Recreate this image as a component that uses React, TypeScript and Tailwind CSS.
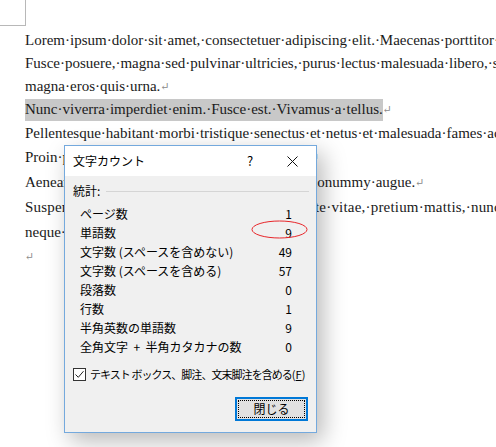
import React from 'react';

const serif = { fontFamily: '"Liberation Serif", "DejaVu Serif", serif' };

const docLines: { text: string; h: number; mark?: boolean; hl?: boolean; wide?: boolean }[] = [
  { text: 'Lorem·ipsum·dolor·sit·amet,·consectetuer·adipiscing·elit.·Maecenas·porttitor·congue', h: 23 },
  { text: 'Fusce·posuere,·magna·sed·pulvinar·ultricies,·purus·lectus·malesuada·libero,·sit·amet', h: 23 },
  { text: 'magna·eros·quis·urna.', h: 23, mark: true },
  { text: 'Nunc·viverra·imperdiet·enim.·Fusce·est.·Vivamus·a·tellus.', h: 23, mark: true, hl: true },
  { text: 'Pellentesque·habitant·morbi·tristique·senectus·et·netus·et·malesuada·fames·ac·turpis', h: 24 },
  { text: 'Proin·pharetra·nonummy·pede.·Mauris·et·orci.', h: 25, mark: true },
  { text: 'Aenean·nec·lorem.·In·porttitor.·Donec·laoreet·nonummy·augue.', h: 25, mark: true },
  { text: 'Suspendisse·dui·purus,·scelerisque·at,·vulputate·vitae,·pretium·mattis,·nunc.·Mauris', h: 25, wide: true },
  { text: 'neque·id·justo·porta·adipiscing·ornare.', h: 24, mark: true },
  { text: '', h: 24, mark: true },
];

const stats: [string, string][] = [
  ['ページ数', '1'],
  ['単語数', '9'],
  ['文字数 (スペースを含めない)', '49'],
  ['文字数 (スペースを含める)', '57'],
  ['段落数', '0'],
  ['行数', '1'],
  ['半角英数の単語数', '9'],
  ['全角文字\u00a0\u00a0+\u00a0\u00a0半角カタカナの数', '0'],
];

const Mark = () => <span className="text-[#8a8a8a] text-[11px] align-baseline">↵</span>;

export default function App() {
  return (
    <div className="relative w-[496px] h-[447px] overflow-hidden bg-white">
      {/* page corner mark */}
      <div className="absolute left-0 top-0 w-[26px] h-[26px] border-r border-b border-[#b8b8b8]" />

      {/* document text */}
      <div className="pt-[29px] pl-[25px] text-[15px] text-[#1a1a1a] whitespace-nowrap" style={serif}>
        {docLines.map((l, i) => (
          <div key={i} className={`flex items-center ${l.wide ? 'tracking-[0.2px]' : ''}`} style={{ height: l.h }}>
            <span className={l.hl ? 'bg-[#c8c8c8] h-[22px] flex items-center' : ''}>{l.text}</span>
            {l.mark && <Mark />}
          </div>
        ))}
      </div>

      {/* dialog */}
      <div
        className="absolute left-[64px] top-[145px] w-[253px] h-[288px] border border-[#74a9dd] bg-[#f0f0f0] flex flex-col shadow-[6px_8px_22px_rgba(0,0,0,0.28)]"
        style={{ fontFamily: '"Noto Sans CJK JP", "Noto Sans", sans-serif' }}
      >
        <div className="h-[30px] bg-white flex items-center pl-[8px] text-[12px] text-black">
          <span className="flex-1">文字カウント</span>
          <span className="w-[14px] text-center mr-[30px] text-[13px]">?</span>
          <svg width="11" height="11" viewBox="0 0 11 11" className="mr-[18px]">
            <path d="M0.5 0.5L10.5 10.5M10.5 0.5L0.5 10.5" stroke="#111" strokeWidth="1" />
          </svg>
        </div>

        <div className="flex-1 flex flex-col text-[12px] text-black pl-[8px] pr-[7px]">
          <div className="flex items-center h-[18px] mt-[6px] gap-[6px]">
            <span>統計:</span>
            <div className="flex-1 h-px bg-[#d5d5d5]" />
          </div>

          <div className="relative mt-[4px] pl-[7px] pr-[17px]">
            {stats.map(([k, v]) => (
              <div key={k} className="flex items-center justify-between h-[19px] whitespace-nowrap">
                <span>{k}</span>
                <span>{v}</span>
              </div>
            ))}
            <svg className="absolute left-[178px] top-[16px]" width="58" height="20" viewBox="0 0 58 20">
              <ellipse cx="28.5" cy="9.5" rx="27.5" ry="8.5" fill="none" stroke="#e8262a" strokeWidth="1" />
            </svg>
          </div>

          <div className="flex items-center mt-[10px] h-[16px] gap-[4px] whitespace-nowrap">
            <div className="w-[13px] h-[13px] shrink-0 border border-[#333] bg-white flex items-center justify-center">
              <svg width="11" height="11" viewBox="0 0 11 11">
                <path d="M1.5 5.5L4.3 8.3L9.5 2.2" fill="none" stroke="#222" strokeWidth="1" />
              </svg>
            </div>
            <span className="text-[11px]">
              <span className="tracking-[-0.95px]">テキスト ボックス、脚注、文末脚注を含める</span>
              (<span className="underline">F</span>)
            </span>
          </div>

          <div className="flex justify-end mt-[15px]">
            <div className="w-[73px] h-[24px] border-2 border-[#0078d7] bg-[#e1e1e1] p-[1px] mr-[1px]">
              <div className="w-full h-full border border-dotted border-black flex items-center justify-center text-[12px]">
                閉じる
              </div>
            </div>
          </div>
        </div>
      </div>
    </div>
  );
}
